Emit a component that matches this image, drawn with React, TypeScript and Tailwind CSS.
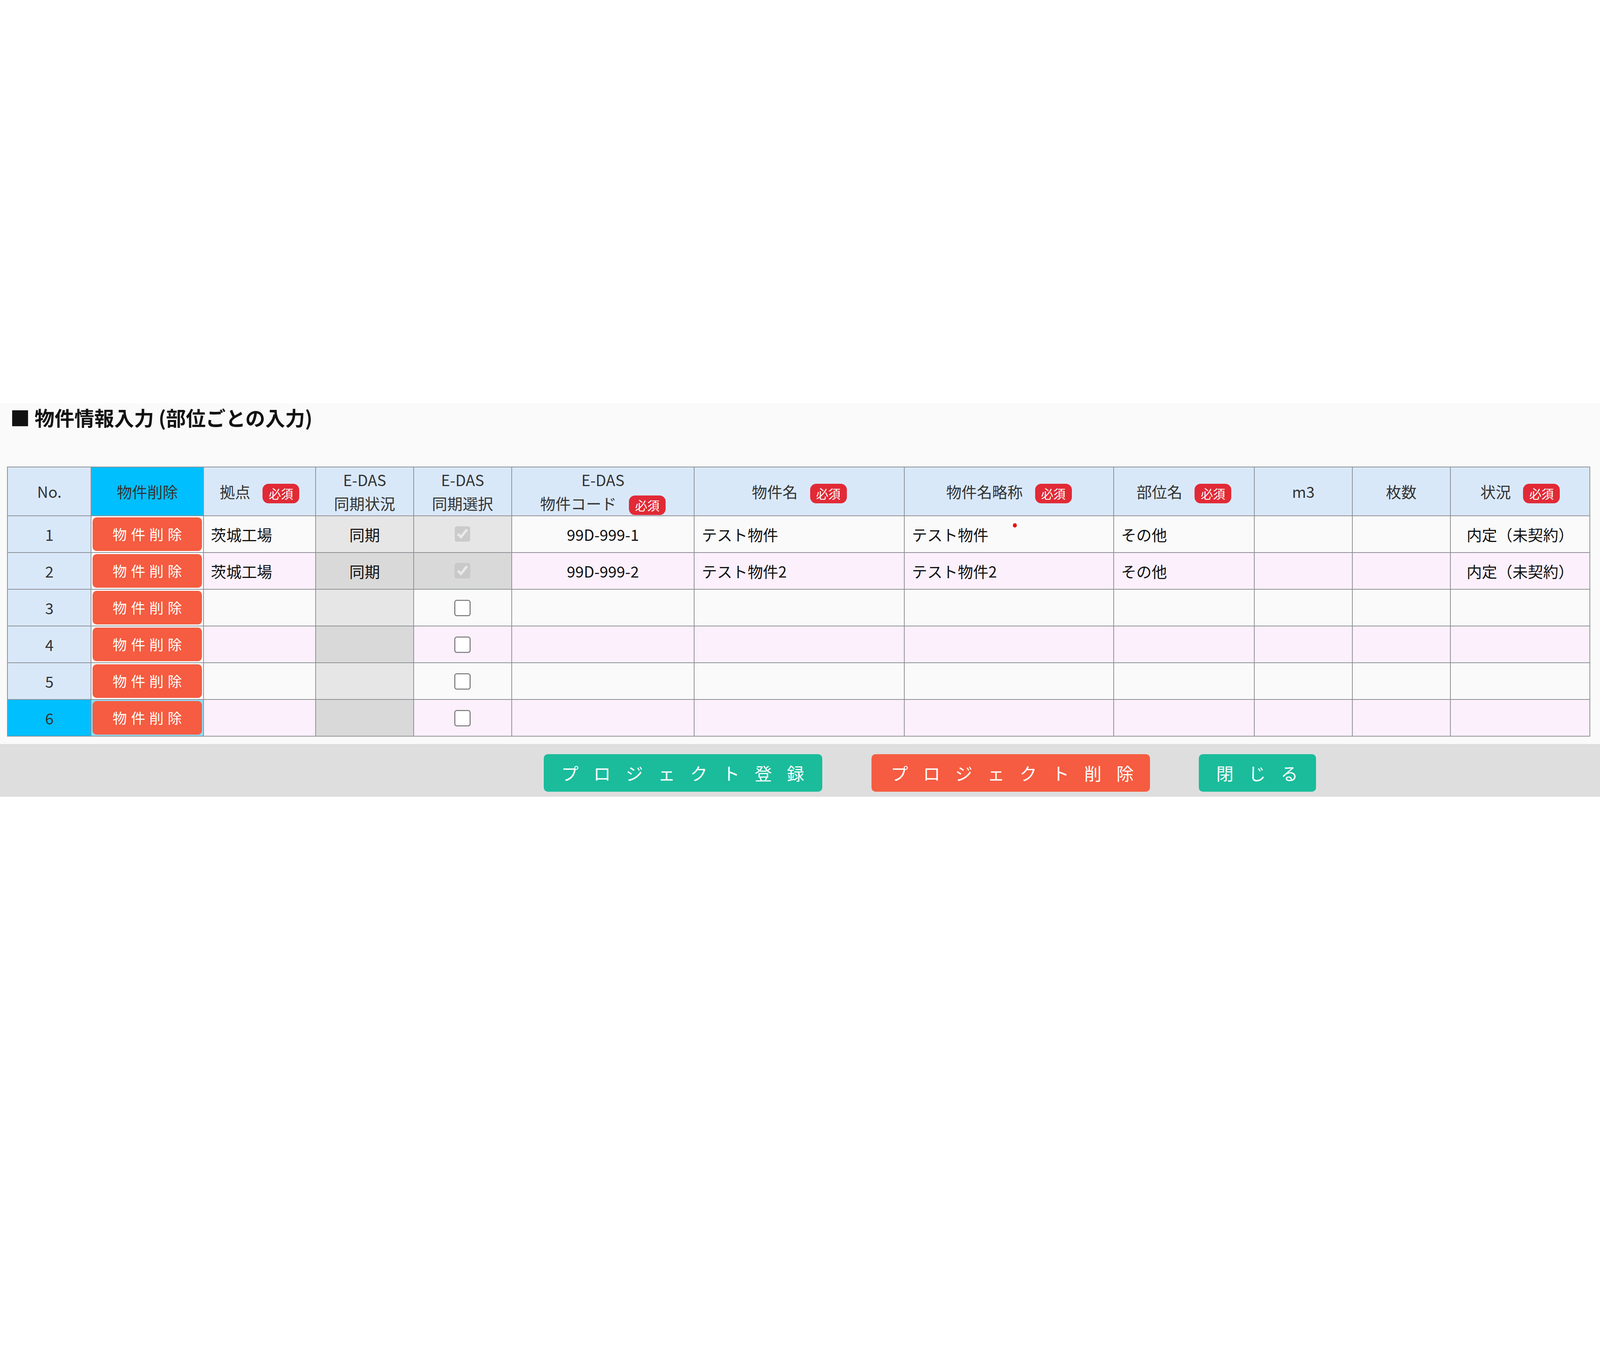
type Row = {
  no: number;
  base: string;
  sync: string;
  checked: boolean | null;
  code: string;
  name: string;
  short: string;
  part: string;
  status: string;
};

const ROWS: Row[] = [
  { no: 1, base: "茨城工場", sync: "同期", checked: true, code: "99D-999-1", name: "テスト物件", short: "テスト物件", part: "その他", status: "内定（未契約）" },
  { no: 2, base: "茨城工場", sync: "同期", checked: true, code: "99D-999-2", name: "テスト物件2", short: "テスト物件2", part: "その他", status: "内定（未契約）" },
  { no: 3, base: "", sync: "", checked: null, code: "", name: "", short: "", part: "", status: "" },
  { no: 4, base: "", sync: "", checked: null, code: "", name: "", short: "", part: "", status: "" },
  { no: 5, base: "", sync: "", checked: null, code: "", name: "", short: "", part: "", status: "" },
  { no: 6, base: "", sync: "", checked: null, code: "", name: "", short: "", part: "", status: "" },
];

function Required() {
  return (
    <span className="ml-[12px] inline-flex h-[19px] items-center rounded-[6px] bg-[#e12a36] px-[6px] align-middle text-[12px] leading-none text-white">
      必須
    </span>
  );
}

const th = "border border-[#8f9296] bg-[#d9e8f9] px-0 text-center align-middle text-[15px] font-normal leading-[23px] text-[#333]";
const td = "border border-[#8f9296] px-[7px] align-middle text-[15px] leading-[20px] text-[#111]";

export default function App() {
  return (
    <div className="min-h-[1176px] bg-white font-['Noto_Sans_CJK_JP',sans-serif] [zoom:2.612]">
      <div className="h-[395px]" />

      {/* 物件情報入力 */}
      <section className="bg-[#fafafa] pb-[7px] pt-[2px]">
        <h2 className="h-[26px] pl-[10px] text-[19.5px] font-bold leading-[24px] text-[#111]">
          ■ 物件情報入力 (部位ごとの入力)
        </h2>

        <table className="mt-[34px] ml-[7px] w-[1551px] table-fixed border-collapse">
          <colgroup>
            <col className="w-[82px]" />
            <col className="w-[110px]" />
            <col className="w-[110px]" />
            <col className="w-[96px]" />
            <col className="w-[96px]" />
            <col className="w-[179px]" />
            <col className="w-[206px]" />
            <col className="w-[205px]" />
            <col className="w-[138px]" />
            <col className="w-[96px]" />
            <col className="w-[96px]" />
            <col className="w-[137px]" />
          </colgroup>
          <thead>
            <tr className="h-[48px]">
              <th className={th}>No.</th>
              <th className={`${th} !bg-[#00bfff]`}>物件削除</th>
              <th className={th}>
                拠点
                <Required />
              </th>
              <th className={th}>
                E-DAS
                <br />
                同期状況
              </th>
              <th className={th}>
                E-DAS
                <br />
                同期選択
              </th>
              <th className={th}>
                E-DAS
                <br />
                物件コード
                <Required />
              </th>
              <th className={th}>
                物件名
                <Required />
              </th>
              <th className={th}>
                物件名略称
                <Required />
              </th>
              <th className={th}>
                部位名
                <Required />
              </th>
              <th className={th}>m3</th>
              <th className={th}>枚数</th>
              <th className={th}>
                状況
                <Required />
              </th>
            </tr>
          </thead>
          <tbody>
            {ROWS.map((r, i) => {
              const even = i % 2 === 1;
              const bg = even ? "bg-[#fbf0fb]" : "bg-[#fafafa]";
              const grey = even ? "bg-[#d9d9d9]" : "bg-[#e6e6e6]";
              const last = r.no === 6;
              return (
                <tr key={r.no} className="h-[36px]">
                  <td className={`${td} text-center text-[#333] ${last ? "bg-[#00bfff]" : "bg-[#d9e8f9]"}`}>{r.no}</td>
                  <td className={`border border-[#8f9296] p-[1px] align-middle ${last ? "bg-[#8fdcf6]" : "bg-white"}`}>
                    <button className="flex h-[33px] w-full items-center justify-center rounded-[4px] bg-[#f55c41] pl-[4px] text-[14px] tracking-[4px] text-white">
                      物件削除
                    </button>
                  </td>
                  <td className={`${td} ${bg}`}>{r.base}</td>
                  <td className={`${td} text-center ${grey}`}>{r.sync}</td>
                  <td className={`${td} pb-[4px] text-center ${r.checked ? grey : bg}`}>
                    {r.checked ? (
                      <input type="checkbox" defaultChecked disabled className="m-0 h-[16px] w-[16px] align-middle" />
                    ) : (
                      <input type="checkbox" className="m-0 h-[16px] w-[16px] align-middle" />
                    )}
                  </td>
                  <td className={`${td} text-center ${bg}`}>{r.code}</td>
                  <td className={`${td} ${bg}`}>{r.name}</td>
                  <td className={`${td} relative ${bg}`}>
                    {r.short}
                    {r.no === 1 && <span className="absolute left-[106px] top-[7px] h-[4px] w-[4px] rounded-full bg-[#e81414]" />}
                  </td>
                  <td className={`${td} ${bg}`}>{r.part}</td>
                  <td className={`${td} ${bg}`} />
                  <td className={`${td} ${bg}`} />
                  <td className={`${td} text-center ${bg}`}>{r.status}</td>
                </tr>
              );
            })}
          </tbody>
        </table>
      </section>

      {/* ボタンバー */}
      <div className="flex h-[52px] items-start gap-[48px] bg-[#dedede] pl-[533px] pt-[10px]">
        <button className="h-[37px] w-[273px] rounded-[4px] bg-[#1abc9c] pl-[17px] text-left text-[17px] tracking-[14.6px] text-white">
          プロジェクト登録
        </button>
        <button className="h-[37px] w-[273px] rounded-[4px] bg-[#f55c41] pl-[19px] text-left text-[17px] tracking-[14.6px] text-white">
          プロジェクト削除
        </button>
        <button className="h-[37px] w-[115px] rounded-[4px] bg-[#1abc9c] pl-[17px] text-left text-[17px] tracking-[14.6px] text-white">
          閉じる
        </button>
      </div>
    </div>
  );
}
